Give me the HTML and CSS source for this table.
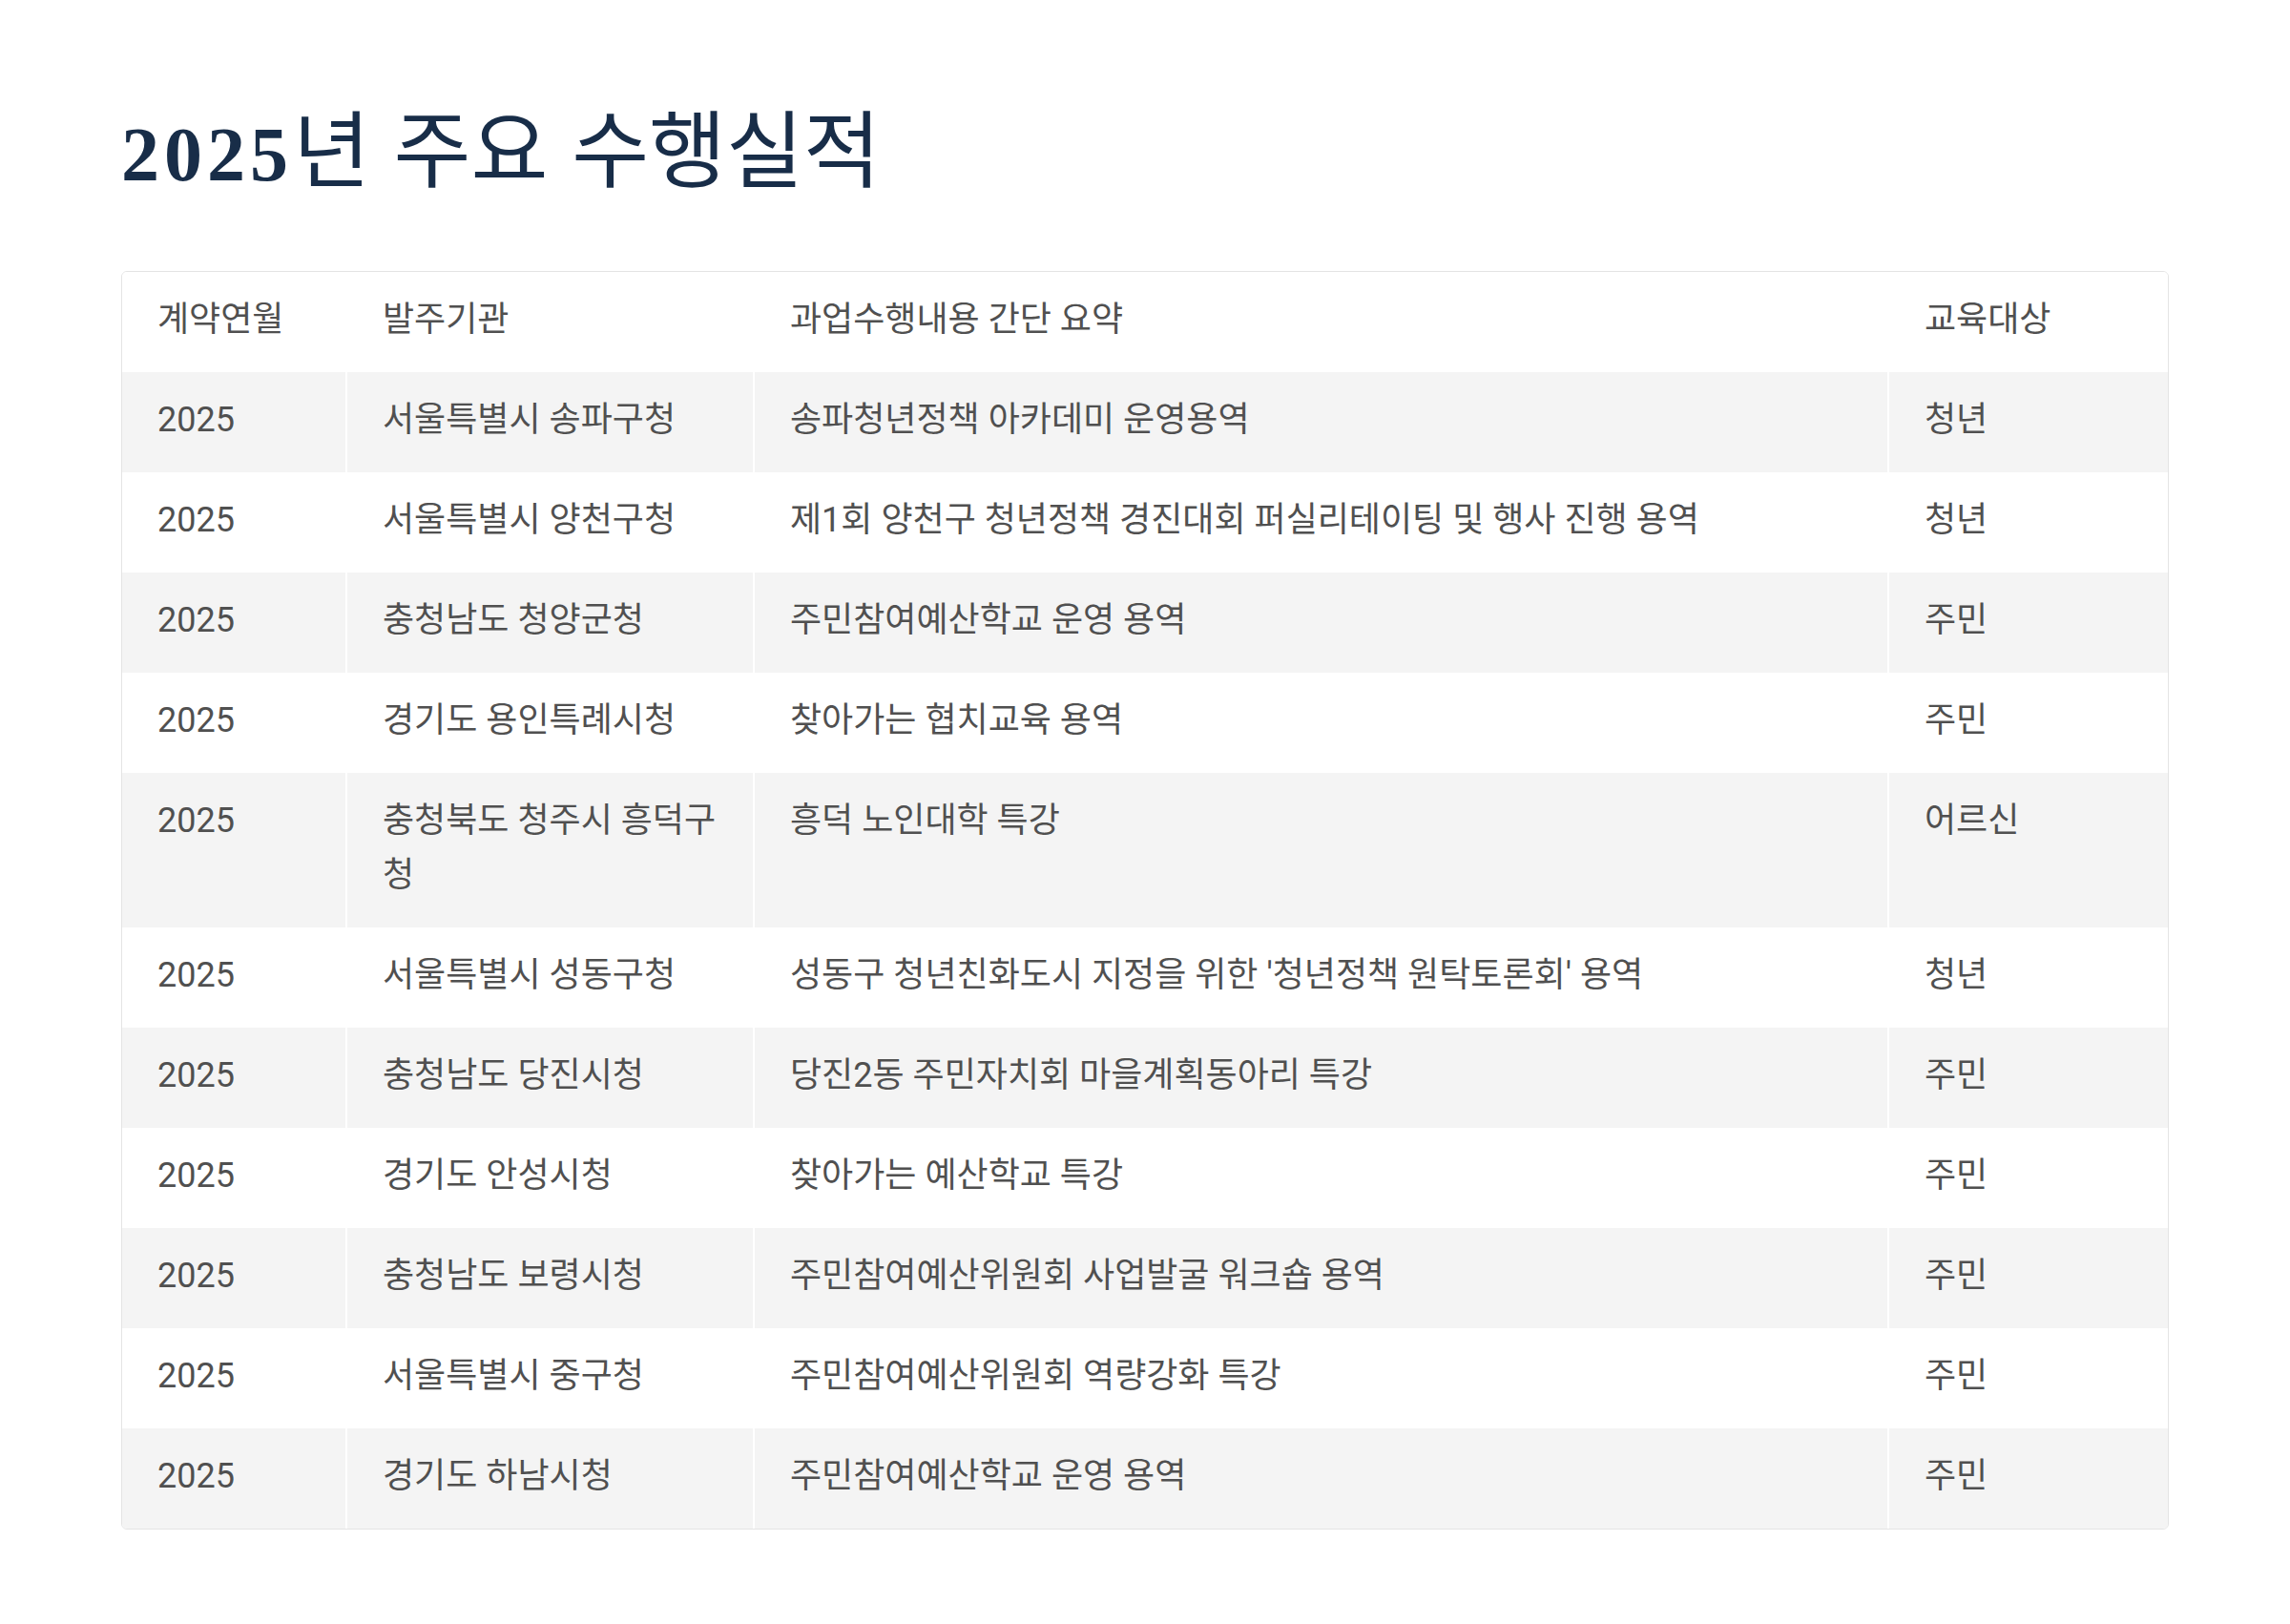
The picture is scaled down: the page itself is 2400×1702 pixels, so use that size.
FILE: index.html
```html
<!DOCTYPE html>
<html lang="ko">
<head>
<meta charset="utf-8">
<title>2025년 주요 수행실적</title>
<link rel="stylesheet" href="styles.css">
</head>
<body>
<main class="page">
  <h1 class="title"><span class="title-year">2025</span>년 주요 수행실적</h1>
  <div class="table-wrap">
    <table class="records">
      <colgroup>
        <col class="c-date">
        <col class="c-org">
        <col class="c-desc">
        <col class="c-target">
      </colgroup>
      <thead>
        <tr><th>계약연월</th><th>발주기관</th><th>과업수행내용 간단 요약</th><th>교육대상</th></tr>
      </thead>
      <tbody>
        <tr><td>2025</td><td>서울특별시 송파구청</td><td>송파청년정책 아카데미 운영용역</td><td>청년</td></tr>
        <tr><td>2025</td><td>서울특별시 양천구청</td><td>제1회 양천구 청년정책 경진대회 퍼실리테이팅 및 행사 진행 용역</td><td>청년</td></tr>
        <tr><td>2025</td><td>충청남도 청양군청</td><td>주민참여예산학교 운영 용역</td><td>주민</td></tr>
        <tr><td>2025</td><td>경기도 용인특례시청</td><td>찾아가는 협치교육 용역</td><td>주민</td></tr>
        <tr><td>2025</td><td>충청북도 청주시 흥덕구청</td><td>흥덕 노인대학 특강</td><td>어르신</td></tr>
        <tr><td>2025</td><td>서울특별시 성동구청</td><td>성동구 청년친화도시 지정을 위한 '청년정책 원탁토론회' 용역</td><td>청년</td></tr>
        <tr><td>2025</td><td>충청남도 당진시청</td><td>당진2동 주민자치회 마을계획동아리 특강</td><td>주민</td></tr>
        <tr><td>2025</td><td>경기도 안성시청</td><td>찾아가는 예산학교 특강</td><td>주민</td></tr>
        <tr><td>2025</td><td>충청남도 보령시청</td><td>주민참여예산위원회 사업발굴 워크숍 용역</td><td>주민</td></tr>
        <tr><td>2025</td><td>서울특별시 중구청</td><td>주민참여예산위원회 역량강화 특강</td><td>주민</td></tr>
        <tr><td>2025</td><td>경기도 하남시청</td><td>주민참여예산학교 운영 용역</td><td>주민</td></tr>
      </tbody>
    </table>
  </div>
</main>
</body>
</html>
```

FILE: styles.css
```css
html, body {
  margin: 0;
  padding: 0;
  background: #ffffff;
}

.page {
  padding: 96px 127px 100px;
}

.title {
  margin: 0 0 67px;
  font-family: "Noto Sans CJK KR", "Noto Sans", sans-serif;
  font-size: 88px;
  font-weight: 400;
  line-height: 110px;
  color: #182d48;
  white-space: nowrap;
}

.title-year {
  font-family: "Liberation Serif", "Times New Roman", serif;
  font-size: 80px;
  font-weight: 700;
  letter-spacing: 5px;
}

.table-wrap {
  border: 1px solid #e4e4e4;
  border-radius: 6px;
  overflow: hidden;
}

.records {
  width: 100%;
  border-collapse: collapse;
  table-layout: fixed;
  font-family: Roboto, "Noto Sans CJK KR", sans-serif;
  font-size: 36px;
  line-height: 57px;
  color: #505050;
}

.c-date { width: 235px; }
.c-org { width: 427px; }
.c-desc { width: 1189px; }
.c-target { width: auto; }

.records th,
.records td {
  padding: 22px 38px 26px 37px;
  text-align: left;
  vertical-align: top;
  font-weight: 400;
  border-left: 2px solid #ffffff;
}

.records th:first-child,
.records td:first-child {
  border-left: none;
}

.records th {
  background: #ffffff;
}

.records tbody tr:nth-child(odd) td {
  background: #f4f4f4;
}

.records tbody tr:nth-child(even) td {
  background: #ffffff;
}
```
